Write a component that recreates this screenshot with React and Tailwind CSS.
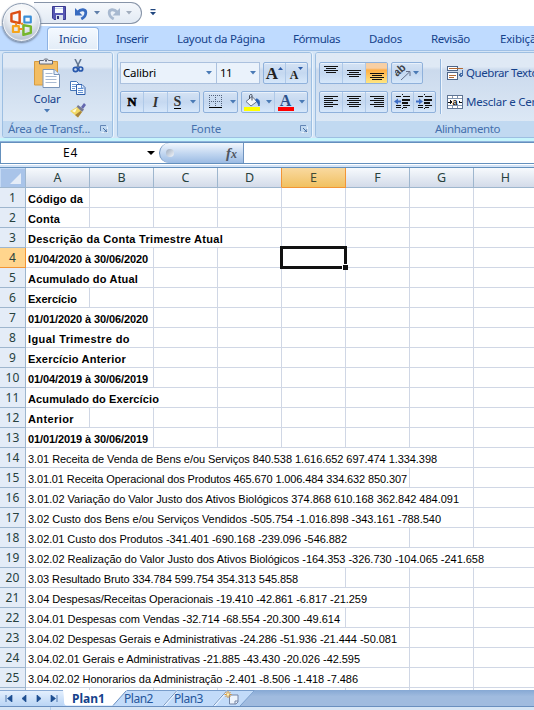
import React, { useLayoutEffect, useRef, useState } from "react";

/* Text set to a given width by adjusting its tracking. */
function Fit({ w, className = "", children }) {
  const ref = useRef(null);
  const [ls, setLs] = useState(0);
  useLayoutEffect(() => {
    const natural = ref.current.getBoundingClientRect().width;
    setLs((w - natural) / String(children).length);
  }, []);
  return (
    <span ref={ref} className={"inline-block shrink-0 whitespace-nowrap " + className} style={{ letterSpacing: ls + "px" }}>
      {children}
    </span>
  );
}

const UI = "font-['Noto_Sans','Open_Sans',sans-serif]";

const rows = [
  ["Código da", 83], ["Conta", 60], ["Descrição da Conta Trimestre Atual", 223],
  ["01/04/2020 à 30/06/2020", 148], ["Acumulado do Atual", 138], ["Exercício", 77],
  ["01/01/2020 à 30/06/2020", 148], ["Igual Trimestre do", 130], ["Exercício Anterior", 126],
  ["01/04/2019 à 30/06/2019", 148], ["Acumulado do Exercício", 159], ["Anterior", 74],
  ["01/01/2019 à 30/06/2019", 148],
  ["3.01 Receita de Venda de Bens e/ou Serviços 840.538 1.616.652 697.474 1.334.398", 437],
  ["3.01.01 Receita Operacional dos Produtos 465.670 1.006.484 334.632 850.307", 407],
  ["3.01.02 Variação do Valor Justo dos Ativos Biológicos 374.868 610.168 362.842 484.091", 459],
  ["3.02 Custo dos Bens e/ou Serviços Vendidos -505.754 -1.016.898 -343.161 -788.540", 441],
  ["3.02.01 Custo dos Produtos -341.401 -690.168 -239.096 -546.882", 347],
  ["3.02.02 Realização do Valor Justo dos Ativos Biológicos -164.353 -326.730 -104.065 -241.658", 484],
  ["3.03 Resultado Bruto 334.784 599.754 354.313 545.858", 298],
  ["3.04 Despesas/Receitas Operacionais -19.410 -42.861 -6.817 -21.259", 367],
  ["3.04.01 Despesas com Vendas -32.714 -68.554 -20.300 -49.614", 340],
  ["3.04.02 Despesas Gerais e Administrativas -24.286 -51.936 -21.444 -50.081", 397],
  ["3.04.02.01 Gerais e Administrativas -21.885 -43.430 -20.026 -42.595", 360],
  ["3.04.02.02 Honorarios da Administração -2.401 -8.506 -1.418 -7.486", 358],
];

function Caret({ className = "fill-[#4a7ab5]" }) {
  return <svg width="6" height="4" viewBox="0 0 6 4" className={"shrink-0 " + className}><path d="M0 0h6L3 3.5z" /></svg>;
}

function Group({ className, label, labelClass = "justify-center", launcher, children }) {
  return (
    <div className={"flex h-[86px] shrink-0 flex-col overflow-hidden rounded-[3px] border border-[#9dbfe2] bg-linear-to-b from-[#dee8f5] via-[#cbdcef] to-[#dce8f6] shadow-[inset_1px_1px_0_#eaf3fc,1px_0_0_#eaf4fd] " + className}>
      <div className="h-[68px] shrink-0 bg-linear-to-b from-[#dfe9f5] from-20% via-[#cbdaed] via-25% to-[#dce8f5]">{children}</div>
      <div className={"flex h-[16px] shrink-0 items-center bg-[#c1d9f1] text-[11.5px] leading-[16px] text-[#4570ad] " + labelClass}>
        {label}
        {launcher && (
          <svg width="8" height="8" viewBox="0 0 8 8" className={"shrink-0 " + launcher}>
            <path d="M.5 6V.5H6" fill="none" stroke="#6486b5" /><path d="M3 3l4 4M7 4v3H4" fill="none" stroke="#456da2" /><path d="M1.5 7.5h6v-6" fill="none" stroke="#fff" opacity=".6" />
          </svg>
        )}
      </div>
    </div>
  );
}

const btn = "flex h-[22px] shrink-0 items-stretch overflow-hidden rounded-[2px] border border-[#8fb1db] bg-linear-to-b from-[#d5e3f4] via-[#c5d8f0] to-[#d6e7fa] shadow-[inset_0_1px_0_#e9f1fb]";
const cell = "flex items-center justify-center border-r border-[#afc9e8] last:border-r-0";

function Lines({ set, className = "" }) {
  return (
    <svg width="16" height="16" viewBox="0 0 16 16" shapeRendering="crispEdges" className={className}>
      {set.map(([x, y, w]) => <rect key={y} x={x} y={y} width={w} height="1" fill="#111" />)}
    </svg>
  );
}
const top = [[1, 1, 14], [3, 3, 10], [1, 5, 14], [3, 7, 10]];
const middle = [[1, 5, 14], [3, 7, 10], [1, 9, 14], [3, 11, 10]];
const bottom = [[1, 8, 14], [3, 10, 10], [1, 12, 14], [3, 14, 10]];
const left = [[1, 2, 14], [1, 4, 9], [1, 6, 14], [1, 8, 9], [1, 10, 14], [1, 12, 9]];
const center = [[1, 2, 14], [3, 4, 10], [1, 6, 14], [3, 8, 10], [1, 10, 14], [3, 12, 10]];
const right = [[1, 2, 14], [5, 4, 10], [1, 6, 14], [5, 8, 10], [1, 10, 14], [5, 12, 10]];

function Indent({ out }) {
  return (
    <svg width="18" height="16" viewBox="0 0 18 16" shapeRendering="crispEdges">
      <path d="M2 2h5M9 2h7M2 11h5M9 11h7M2 13h5M9 13h4" stroke="#111" transform="translate(0 .5)" />
      <path d="M8 5.5h8M8 8.5h6" stroke="#111" strokeWidth="2" />
      <path d="M8.5 0v2M8.5 14v2" stroke="#111" strokeDasharray="1 1" />
      <path d={out ? "M0 7.5l4-3v2h3v2H4v2z" : "M7 7.5l-4-3v2H0v2h3v2z"} fill="#3f6fc5" shapeRendering="auto" />
    </svg>
  );
}

function OfficeLogo() {
  return (
    <div className="absolute left-[2px] top-[3px] z-10 flex h-[39px] w-[39px] items-center justify-center rounded-full border border-[#8c9bb0] bg-[radial-gradient(circle_at_50%_28%,#ffffff_0%,#eef1f5_42%,#bdc7d5_75%,#eef3f8_100%)] shadow-[0_1px_2px_#6e7f99,inset_0_0_1px_1px_#f7f9fc]">
      <svg width="26" height="27" viewBox="1 1 22 23" fill="none">
        <path d="M3 5.2L10 3.2V13L3 11.4Z" stroke="#dc4e13" strokeWidth="2.1" strokeLinejoin="round" />
        <path d="M14 7.500h5.500v5H14z" stroke="#3b8fd8" strokeWidth="1.8" strokeLinejoin="round" />
        <path d="M4.3 15.6h5v5h-5z" stroke="#f5a51c" strokeWidth="1.9" strokeLinejoin="round" />
        <path d="M13.2 14.8l6.3 1v5.4l-6.3 1.8z" stroke="#76b62c" strokeWidth="2.1" strokeLinejoin="round" />
        <path d="M11 13.500h2M7 12.8v2.5M9.5 18h3" stroke="#f08a24" strokeWidth="1.7" />
      </svg>
    </div>
  );
}

function QuickAccess() {
  return (
    <div className="relative h-[26px] shrink-0 bg-white">
      <OfficeLogo />
      <div className="flex h-full items-start pl-[34px] pt-[2px]">
        <div className="flex h-[22px] w-[108px] shrink-0 items-center rounded-r-full border border-l-0 border-[#8794a8] bg-linear-to-b from-[#f5f8fc] to-[#e2eaf4] pl-[18px]">
          <svg width="14" height="14" viewBox="0 0 14 14" className="shrink-0">
            <path d="M.5.5h13v13H2L.5 12z" fill="#5657b4" stroke="#3b3b91" />
            <path d="M3 1h8v6H3z" fill="#f7fbff" /><path d="M3 2h8v1H3z" fill="#c8d7ef" />
            <path d="M4 9h7v5H4z" fill="#d9e1ee" /><path d="M5 10h2v3H5z" fill="#30317c" />
          </svg>
          <svg width="13" height="13" viewBox="0 0 13 13" className="ml-[9px] shrink-0">
            <path d="M2.5 5.500C6 1.5 11 2 10.8 6c-.2 3-2.3 4.8-4.5 6" fill="none" stroke="#386bc0" strokeWidth="2.8" />
            <path d="M0 1v7.500h7.500z" fill="#386bc0" />
          </svg>
          <Caret className="ml-[6px] fill-[#5f7ea9]" />
          <svg width="13" height="13" viewBox="0 0 13 13" className="ml-[7px] shrink-0">
            <path d="M10.5 5.500C7 1.5 2 2 2.2 6c.2 3 2.3 4.8 4.5 6" fill="none" stroke="#a8b9d0" strokeWidth="2.8" />
            <path d="M13 1v7.500H5.500z" fill="#a8b9d0" />
          </svg>
          <Caret className="ml-[6px] fill-[#a1adbd]" />
        </div>
        <svg width="6" height="7" viewBox="0 0 6 7" className="ml-[8px] mt-[7px]"><path d="M.5 0h5v1.3h-5zM0 3h6L3 6.3z" fill="#21477f" /></svg>
      </div>
    </div>
  );
}

function Tabs() {
  const t = "leading-[23px]";
  return (
    <div className="flex h-[24px] shrink-0 items-end bg-[#bfdbff] text-[11.5px] text-[#15428b]">
      <div className="ml-[47px] flex h-[23px] w-[52px] shrink-0 items-center rounded-t-[4px] border border-b-0 border-[#8db2e3] bg-linear-to-b from-[#f4f9ff] to-[#e2ecf7] pl-[11px] shadow-[inset_0_0_0_1px_#fafdff]"><Fit w={28}>Início</Fit></div>
      <Fit w={32} className={"ml-[17px] " + t}>Inserir</Fit>
      <Fit w={88} className={"ml-[29px] " + t}>Layout da Página</Fit>
      <Fit w={47} className={"ml-[28px] " + t}>Fórmulas</Fit>
      <Fit w={33} className={"ml-[29px] " + t}>Dados</Fit>
      <Fit w={39} className={"ml-[29px] " + t}>Revisão</Fit>
      <Fit w={43} className={"ml-[30px] " + t}>Exibição</Fit>
    </div>
  );
}

function Clipboard() {
  return (
    <Group className="w-[111px]" label={<Fit w={82}>Área de Transf...</Fit>} labelClass="pl-[5px]" launcher="ml-[10px]">
      <div className="flex pl-[30px] pt-[5px]">
        <div className="flex w-[28px] flex-col items-center">
          <svg width="28" height="31" viewBox="0 0 28 31">
            <path d="M1.5 3.5h23V27h-23z" fill="#f3bd62" stroke="#d69b3f" />
            <path d="M6.500 5V2.500h4C10.500.500 15.500.500 15.500 2.500h4V6h-13z" fill="#e7eaf0" stroke="#626979" />
            <circle cx="13" cy="2.800" r="1" fill="#555e70" />
            <path d="M10 11.500h11l5.500 5v13H10z" fill="#fff" stroke="#7994b9" />
            <path d="M21 11.500v5h5.500" fill="#e4eefb" stroke="#7994b9" />
            <path d="M12.500 15.500h7M12.500 18.500h11M12.500 21.500h11M12.500 24.500h11" stroke="#a9bad2" />
          </svg>
          <Fit w={27} className="mt-[2px] text-[11.5px] leading-[16px] text-[#15428b]">Colar</Fit>
          <Caret className="mt-[2px] fill-[#4a7ab5]" />
        </div>
        <div className="ml-[9px] flex flex-col items-center gap-[8px] pt-[1px]">
          <svg width="14" height="14" viewBox="0 0 14 14" fill="none">
            <path d="M4 0l4 8M10 0L6 8" stroke="#657994" strokeWidth="1.6" />
            <circle cx="4.500" cy="10.500" r="2.200" stroke="#2858ac" strokeWidth="1.700" /><circle cx="9.700" cy="10" r="2" stroke="#2858ac" strokeWidth="1.700" />
          </svg>
          <svg width="16" height="14" viewBox="0 0 16 14">
            <path d="M.5.5h6l2 2v7h-8z" fill="#fff" stroke="#4374b8" /><path d="M2 3.500h4M2 5.500h5M2 7.500h3" stroke="#6e9bd5" />
            <path d="M6.500 3.500h5.500l3 3v7H6.500z" fill="#f4f9ff" stroke="#315fab" /><path d="M8 7.500h5M8 9.500h5M8 11.500h5M11.500 4v3h3" fill="none" stroke="#6492d2" />
          </svg>
          <svg width="16" height="15" viewBox="0 0 16 15">
            <path d="M11 4l3-4 2 2-3 4z" fill="#6368b0" /><path d="M8 2l6 4.500-2 2.500-6-4z" fill="#777b96" />
            <path d="M7 4l5 5-4 5.500L0 8z" fill="#f0d865" /><path d="M5 12l3 2.500 4-5.500-1.500-1z" fill="#a9853c" /><path d="M7 5L2 8l3 1.500z" fill="#fffadb" />
          </svg>
        </div>
      </div>
    </Group>
  );
}

function FontGroup() {
  const combo = "flex h-[22px] shrink-0 items-center border border-[#abc1de] bg-[#eaf2fb] text-[11.5px] text-black";
  const serif = "font-['Liberation_Serif',serif]";
  return (
    <Group className="ml-[4px] w-[195px]" label={<Fit w={30}>Fonte</Fit>} labelClass="pl-[73px]" launcher="ml-[79px]">
      <div className="pl-[2px] pt-[9px]">
        <div className="flex">
          <div className={combo + " w-[97px] pl-[2px]"}><Fit w={33}>Calibri</Fit><Caret className="ml-[50px] fill-[#4a7ab5]" /></div>
          <div className={combo + " w-[43px] border-l-0 pl-[3px]"}><Fit w={12}>11</Fit><Caret className="ml-[18px] fill-[#4a7ab5]" /></div>
          <div className={btn + " ml-[3px] w-[45px]"}>
            <div className={cell + " w-[22px] gap-0 " + serif}>
              <span className="pt-[2px] text-[17px] font-bold leading-[20px] text-[#222]">A</span><svg width="5" height="14" viewBox="0 0 5 14"><path d="M0 4l2.500-3L5 4z" fill="#2b5ba7" /></svg>
            </div>
            <div className={cell + " w-[21px] " + serif}>
              <span className="pt-[4px] text-[12px] font-bold leading-[18px] text-[#222]">A</span><svg width="5" height="14" viewBox="0 0 5 14"><path d="M0 1h5L2.500 4z" fill="#2b5ba7" /></svg>
            </div>
          </div>
        </div>
        <div className="mt-[7px] flex">
          <div className={btn + " w-[80px]"}>
            <div className={cell + " w-[23px] text-[13px] font-black text-black [-webkit-text-stroke:0.5px_black] " + serif}>N</div>
            <div className={cell + " w-[24px] text-[14px] font-bold italic text-[#333] " + serif}>I</div>
            <div className={cell + " w-[31px] gap-[9px] pl-[3px] text-[14px] font-bold text-[#333] " + serif}><span className="border-b border-black leading-[13px]">S</span><Caret /></div>
          </div>
          <div className={btn + " ml-[3px] w-[35px]"}>
            <div className="flex items-center gap-[7px] pl-[5px]">
              <svg width="14" height="14" viewBox="0 0 14 14" shapeRendering="crispEdges"><path d="M0 .5h13M0 6.500h13M.5 0v12M6.500 0v12M12.500 0v12" stroke="#52627b" strokeDasharray="1 1" /><path d="M0 12.500h13" stroke="#000" strokeWidth="1.500" /></svg>
              <Caret />
            </div>
          </div>
          <div className={btn + " ml-[3px] w-[67px]"}>
            <div className={cell + " w-[33px] gap-[5px]"}>
              <svg width="17" height="17" viewBox="0 0 17 17">
                <path d="M2 7.500l6-5 5 5-6 4.500z" fill="#f5f8fc" stroke="#68758a" /><path d="M5.500 5V1.500C6.500 0 8 0 8 1.500v5" fill="none" stroke="#454d5c" />
                <path d="M12 5c3 0 4 2 3 7-1-2-1-4-3-5z" fill="#2d61b2" stroke="#2d61b2" /><path d="M0 13h16v4H0z" fill="#ff0" />
              </svg><Caret />
            </div>
            <div className={cell + " w-[32px] gap-[5px]"}>
              <div className="flex w-[16px] flex-col items-center pt-[1px]"><span className={"h-[13px] text-[16px] font-bold leading-[13px] text-[#2b4f88] " + serif}>A</span><span className="h-[4px] w-[16px] bg-[#f00]" /></div><Caret />
            </div>
          </div>
        </div>
      </div>
    </Group>
  );
}

function AlignGroup() {
  return (
    <Group className="ml-[3px] w-[306px]" label={<Fit w={65}>Alinhamento</Fit>} labelClass="pl-[119px]">
      <div className="flex pl-[3px] pt-[9px]">
        <div>
          <div className="flex">
            <div className={btn + " w-[69px]"}>
              <div className={cell + " w-[23px] items-start pt-[2px]"}><Lines set={top} /></div>
              <div className={cell + " w-[23px] items-start pt-[2px]"}><Lines set={middle} /></div>
              <div className={cell + " w-[21px] items-start bg-linear-to-b from-[#f7cfa4] from-25% via-[#ffae42] via-35% to-[#ffe681] pt-[2px]"}><Lines set={bottom} /></div>
            </div>
            <div className={btn + " ml-[3px] w-[32px] items-center pl-[3px]"}>
              <svg width="17" height="18" viewBox="0 0 17 18" className="mt-[1px] shrink-0">
                <text x="2" y="13" transform="rotate(-42 2 13)" className="font-['Liberation_Sans',sans-serif] text-[11px] font-bold" fill="#3e4147">ab</text>
                <path d="M6 16L14.500 8M11 7.500H15V12" fill="none" stroke="#66708a" />
              </svg>
              <Caret className="ml-[1px] self-center fill-[#4a7ab5]" />
            </div>
          </div>
          <div className="mt-[7px] flex">
            <div className={btn + " w-[69px]"}>
              <div className={cell + " w-[23px]"}><Lines set={left} /></div>
              <div className={cell + " w-[23px]"}><Lines set={center} /></div>
              <div className={cell + " w-[21px]"}><Lines set={right} /></div>
            </div>
            <div className={btn + " ml-[3px] w-[45px]"}>
              <div className={cell + " w-[22px]"}><Indent out /></div>
              <div className={cell + " w-[21px]"}><Indent /></div>
            </div>
          </div>
        </div>
        <div className="ml-[4px] mt-[-3px] h-[55px] w-px shrink-0 bg-[#94b6dc] shadow-[1px_0_0_#eef5fd]" />
        <div className="ml-[6px] flex flex-col gap-[7px] text-[11.5px] text-[#15428b]">
          <div className="flex h-[22px] items-center">
            <svg width="17" height="16" viewBox="0 0 17 16" shapeRendering="crispEdges" className="mr-[2px]">
              <path d="M.5 1.500h10v4H.5zM.5 7.500h10v7H.5z" fill="#fff" stroke="#4d6588" /><path d="M2 3.500h14M2 10.500h7M2 12.500h5" stroke="#b26a35" />
              <path d="M15.500 5v5H13M14.500 8l-2 2 2 2" fill="none" stroke="#456da7" />
            </svg>
            <Fit w={72}>Quebrar Texto</Fit>
          </div>
          <div className="flex h-[22px] items-center">
            <svg width="17" height="16" viewBox="0 0 17 16" shapeRendering="crispEdges" className="mr-[2px]">
              <path d="M.5 1.500h15v13H.5z" fill="#fff" stroke="#5f7594" /><path d="M1 4.500h14M1 11.500h14M5.500 2v2M10.500 2v2M5.500 12v2M10.500 12v2" stroke="#8295af" />
              <path d="M1 8h3M12 8h3" stroke="#111" /><path d="M5 8L3 6v4zM11 8l2-2v4z" fill="#111" />
              <text x="5.500" y="10.500" className="font-['Liberation_Sans',sans-serif] text-[9px] font-bold" fill="#111">a</text>
            </svg>
            <Fit w={108}>Mesclar e Centralizar</Fit>
          </div>
        </div>
      </div>
    </Group>
  );
}

function FormulaBar() {
  return (
    <div className="flex h-[22px] shrink-0 border-y border-[#6490bd] bg-white">
      <div className="flex w-[158px] shrink-0 items-center border-l border-[#6490bd] pl-[62px] text-[12px] text-black">
        <Fit w={15}>E4</Fit>
        <svg width="8" height="4" viewBox="0 0 8 4" className="ml-[69px]"><path d="M0 0h8L4 4z" /></svg>
      </div>
      <div className="ml-[1px] flex w-[85px] shrink-0 items-center rounded-l-full border-x border-[#6f93bf] bg-linear-to-b from-[#f2f7fd] via-[#c4d8f1] to-[#9bbbe3] pl-[6px]">
        <span className="h-[8px] w-[8px] rounded-full bg-linear-to-br from-[#9eacbf] to-[#f4f7fb]" />
        <span className="ml-[52px] font-['Liberation_Serif',serif] text-[15px] font-bold italic leading-[18px] text-[#505660]">f<span className="text-[12px]">x</span></span>
      </div>
    </div>
  );
}

function Sheet() {
  const cols = "ABCDEFGH".split("");
  return (
    <div className="relative h-[522px] shrink-0 overflow-hidden bg-white">
      <div className="flex h-[20px] w-[538px]">
        <div className="flex w-[26px] shrink-0 items-end justify-end border-b border-r border-[#9eb6ce] bg-[#a9c4e9] pb-[3px] pr-[4px] shadow-[inset_1px_1px_0_#c5daf5]"><svg width="11" height="11" viewBox="0 0 11 11"><path d="M11 0v11H0z" fill="#e4ecf7" /></svg></div>
        {cols.map((c) => (
          <div key={c} className={"flex w-[64px] shrink-0 items-center justify-center border-b border-r pt-[1px] text-[12.5px] leading-[18px] " + (c === "E" ? "border-[#f29536] bg-linear-to-b from-[#f9d99f] to-[#f1c15f] text-[#3e4a35]" : c === "D" ? "border-[#9eb6ce] border-r-[#f29536] bg-linear-to-b from-[#f7fafd] to-[#d3dbe9] text-[#27413e]" : "border-[#9eb6ce] bg-linear-to-b from-[#f7fafd] to-[#d3dbe9] text-[#27413e]")}>{c}</div>
        ))}
      </div>
      {rows.map(([text, end], i) => {
        const span = Math.ceil((end - 25) / 64);
        return (
          <div key={i} className="flex h-[20px] w-[538px]">
            <div className={"flex w-[26px] shrink-0 items-center justify-center border-b border-r text-[12px] leading-[19px] " + (i === 3 ? "border-[#f29536] bg-[#ffd58d] text-[#27413e]" : "border-[#9eb6ce] bg-[#e4ecf7] text-[#27413e]")}><Fit w={i < 9 ? 7 : 14}>{i + 1}</Fit></div>
            <div className={"flex shrink-0 items-center border-b border-r border-[#d0d7e5] pl-[2px] pt-[2px] font-['Liberation_Sans',Arial,sans-serif] text-[11px] leading-[16px] text-black " + (i < 13 ? "font-bold" : "")} style={{ width: span * 64 }}>
              <Fit w={end - 28}>{text}</Fit>
            </div>
            {cols.slice(span).map((c) => <div key={c} className="w-[64px] shrink-0 border-b border-r border-[#d0d7e5]" />)}
          </div>
        );
      })}
      <div className="flex h-[20px] w-[538px]">
        <div className="w-[26px] shrink-0 border-r border-[#9eb6ce] bg-[#e4ecf7]" />
        {cols.map((c) => <div key={c} className="w-[64px] shrink-0 border-r border-[#d0d7e5]" />)}
      </div>
      <div className="absolute left-[280px] top-[78px] h-[23px] w-[67px] border-[3px] border-[#111]" />
      <div className="absolute left-[342px] top-[96px] h-[6px] w-[6px] border-l border-t border-white bg-[#111]" />
    </div>
  );
}

function SheetTabs() {
  const navs = ["M1 0v7M7 0v7L2.500 3.500z", "M6 0v7L2 3.500z", "M2 0v7l4-3.500z", "M1 0v7l4.500-3.500zM7 0v7"];
  return (
    <div className="flex h-[17px] shrink-0 border-b border-[#6a8fbf] bg-linear-to-b from-[#86a8d4] to-[#a0bbdf] to-40%">
      <div className="flex w-[63px] shrink-0 items-center gap-[7px] border-t border-[#8aabd5] bg-linear-to-b from-[#e3effd] to-[#bad5f5] pl-[5px]">
        {navs.map((d) => <svg key={d} width="8" height="7" viewBox="0 0 8 7"><path d={d} fill="#1d4e91" stroke="#1d4e91" strokeWidth=".7" /></svg>)}
      </div>
      <div className="relative w-[198px] shrink-0">
        <svg width="198" height="16" viewBox="0 0 198 16" className="absolute left-0 top-0">
          <path d="M0 .500h192L177 16H0z" fill="#c2dbf9" /><path d="M0 .500h191.500L177 16" fill="none" stroke="#789dcb" />
          <path d="M101 15.500L114 1M151 15.500L164 1" stroke="#e9f3ff" strokeWidth="2.500" /><path d="M100.500 15.500L113.500 1M150.500 15.500L163.500 1" stroke="#6a91c2" />
          <path d="M0 0h64L50 15.500H4q-3 0-3-4z" fill="#fff" /><path d="M63 1L50 15.500" stroke="#6a91c2" />
          <path d="M166.500 5h8.500v7l-2 2h-6.500z" fill="#edf4fd" stroke="#7485a5" /><path d="M175 11h-3v3" fill="none" stroke="#7485a5" />
          <path d="M165 1v7M161.500 4.500h7M162.500 2l5 5M167.500 2l-5 5" stroke="#dc952f" /><circle cx="165" cy="4.500" r="1.300" fill="#fff5ba" />
        </svg>
        <div className="relative flex text-[12px] leading-[17px] text-[#25569c]">
          <Fit w={33} className="ml-[9px] font-bold text-[#15428b]">Plan1</Fit>
          <Fit w={29} className="ml-[19px]">Plan2</Fit>
          <Fit w={29} className="ml-[21px]">Plan3</Fit>
        </div>
      </div>
    </div>
  );
}

export default function App() {
  return (
    <div className={"flex h-[710px] w-[534px] flex-col overflow-hidden bg-white " + UI}>
      <QuickAccess />
      <Tabs />
      <div className="h-[92px] shrink-0 overflow-hidden border-b border-t border-b-[#8eb2da] border-t-[#9fc0e6] bg-[#d5e5f6] pt-[1px] shadow-[inset_0_-3px_0_#c6f5fc]">
        <div className="flex pl-[2px]"><Clipboard /><FontGroup /><AlignGroup /></div>
      </div>
      <FormulaBar />
      <div className="h-[4px] shrink-0 border-b border-t border-b-[#6490bd] border-t-white bg-[#d3e3f6]" />
      <Sheet />
      <SheetTabs />
      <div className="flex grow bg-[#d6e5f5]"><div className="w-[51px] border-r border-[#b5cce7]" /></div>
    </div>
  );
}
